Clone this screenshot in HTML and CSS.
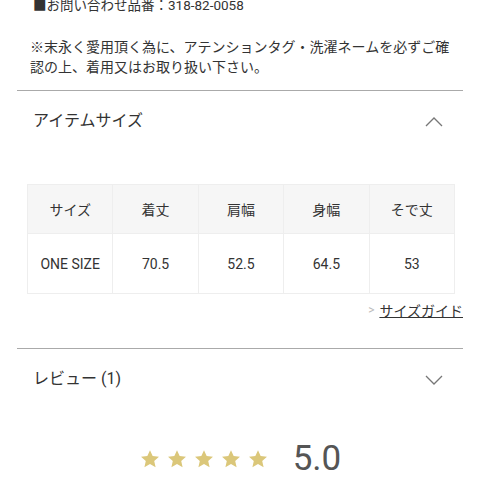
FILE: index.html
```html
<!DOCTYPE html>
<html lang="ja">
<head>
    <meta charset="UTF-8">
    <meta name="viewport" content="width=device-width, initial-scale=1.0">
    <title>アイテム詳細</title>
    <link rel="stylesheet" href="styles.css">
</head>
<body>
    <div class="page">
        <div class="info">
            <p class="code">■お問い合わせ品番：318-82-0058</p>
            <p class="note">※末永く愛用頂く為に、アテンションタグ・洗濯ネームを必ずご確認の上、着用又はお取り扱い下さい。</p>
        </div>

        <section class="panel">
            <div class="panel-head">
                <h2>アイテムサイズ</h2>
                <svg class="chevron" width="18" height="10" viewBox="0 0 18 10">
                    <polyline points="1,9 9,1 17,9" fill="none" stroke="#777" stroke-width="1.3"/>
                </svg>
            </div>
            <table class="sizes">
                <tr>
                    <th>サイズ</th>
                    <th>着丈</th>
                    <th>肩幅</th>
                    <th>身幅</th>
                    <th>そで丈</th>
                </tr>
                <tr>
                    <td>ONE SIZE</td>
                    <td>70.5</td>
                    <td>52.5</td>
                    <td>64.5</td>
                    <td>53</td>
                </tr>
            </table>
            <div class="guide">
                <span class="arrow">&gt;</span>
                <a href="#">サイズガイド</a>
            </div>
        </section>

        <section class="panel">
            <div class="panel-head">
                <h2>レビュー (1)</h2>
                <svg class="chevron" width="18" height="10" viewBox="0 0 18 10">
                    <polyline points="1,1 9,9 17,1" fill="none" stroke="#777" stroke-width="1.3"/>
                </svg>
            </div>
            <div class="rating">
                <div class="stars">
                    <svg viewBox="0 0 24 24"><path d="M12 2.5l2.9 6.3 6.9.7-5.2 4.6 1.5 6.8L12 17.4l-6.1 3.5 1.5-6.8-5.2-4.6 6.9-.7z"/></svg>
                    <svg viewBox="0 0 24 24"><path d="M12 2.5l2.9 6.3 6.9.7-5.2 4.6 1.5 6.8L12 17.4l-6.1 3.5 1.5-6.8-5.2-4.6 6.9-.7z"/></svg>
                    <svg viewBox="0 0 24 24"><path d="M12 2.5l2.9 6.3 6.9.7-5.2 4.6 1.5 6.8L12 17.4l-6.1 3.5 1.5-6.8-5.2-4.6 6.9-.7z"/></svg>
                    <svg viewBox="0 0 24 24"><path d="M12 2.5l2.9 6.3 6.9.7-5.2 4.6 1.5 6.8L12 17.4l-6.1 3.5 1.5-6.8-5.2-4.6 6.9-.7z"/></svg>
                    <svg viewBox="0 0 24 24"><path d="M12 2.5l2.9 6.3 6.9.7-5.2 4.6 1.5 6.8L12 17.4l-6.1 3.5 1.5-6.8-5.2-4.6 6.9-.7z"/></svg>
                </div>
                <span class="score">5.0</span>
            </div>
        </section>
    </div>
</body>
</html>
```

FILE: styles.css
```css
body {
    margin: 0;
    font-family: Roboto, "Noto Sans CJK JP", sans-serif;
    color: #333;
    background: #fff;
}

.page {
    padding: 0 18px 0 17px;
    margin-top: -5px;
}

.info {
    padding: 0 12px 0 13px;
    font-size: 14px;
    line-height: 20px;
}

.info p {
    margin: 0;
}

.info .code {
    font-size: 13.5px;
    padding-left: 3px;
    margin-bottom: 22px;
}

.note {
    padding-bottom: 13px;
}

.panel {
    border-top: 1px solid #aaa;
}

.panel-head {
    display: flex;
    align-items: center;
    justify-content: space-between;
    height: 61px;
    padding: 0 20px 0 16px;
}

.panel-head h2 {
    margin: 0 0 6px;
    font-size: 16px;
    font-weight: normal;
    color: #333;
}

.sizes {
    width: 428px;
    margin: 32px 0 0 10px;
    border-collapse: collapse;
    table-layout: fixed;
    font-size: 14px;
}

.sizes th,
.sizes td {
    border: 1px solid #eee;
    text-align: center;
    font-weight: normal;
    color: #333;
}

.sizes th {
    height: 46px;
    background: #f6f6f6;
}

.sizes td {
    height: 57px;
}

.guide {
    display: flex;
    justify-content: flex-end;
    align-items: center;
    gap: 5px;
    height: 32px;
    margin-bottom: 22px;
    font-size: 14px;
}

.guide .arrow {
    color: #bbb;
    font-size: 12px;
}

.guide a {
    color: #333;
    text-decoration: underline;
}

.rating {
    display: flex;
    justify-content: center;
    align-items: center;
    gap: 24px;
    margin-top: 29px;
}

.stars {
    display: flex;
    gap: 5px;
}

.stars svg {
    width: 22px;
    height: 22px;
    fill: #dbc77a;
}

.score {
    font-size: 35px;
    color: #555;
    line-height: 40px;
}
```
